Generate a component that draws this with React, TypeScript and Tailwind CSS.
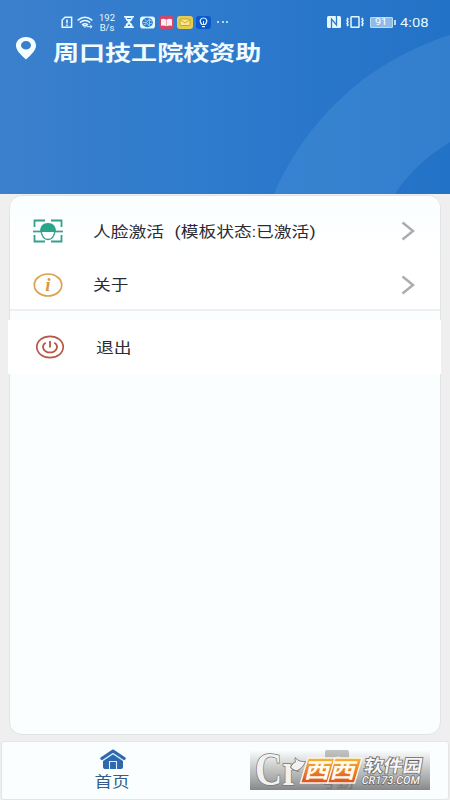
import React from 'react';

const SANS = "font-['Roboto','Noto_Sans_CJK_SC',sans-serif]";

function StatusBar() {
  return (
    <div className="flex h-[33px] items-center pl-[61px] pt-[11px] text-[#e4f8ff]">
      <svg className="h-[13px] w-[12px] shrink-0" viewBox="0 0 12 13" fill="none" stroke="currentColor" strokeWidth="1.5">
        <path d="M1.2 4V11.3h9.4V1.2H4z" />
        <path d="M6 3.6v4M6 8.6v1.5" strokeWidth="1.6" />
      </svg>
      <svg className="ml-[4px] h-[13px] w-[16px] shrink-0" viewBox="0 0 16 13" fill="none" stroke="currentColor" strokeWidth="1.5">
        <path d="M.6 4.4Q8-1.8 15.4 4.4M2.8 6.6q5.2-4.2 10.4 0M5 8.8q3-2.3 6 0" />
        <path d="M6 9.5h4l-2 2zM10 10.7h5m-2-2 2 2-2 1.5" strokeWidth="1" />
      </svg>
      <div className="ml-[5px] mt-px w-[18px] shrink-0 text-center font-['Roboto',sans-serif] text-[9.5px] leading-[10px]">
        <div>192</div>
        <div>B/s</div>
      </div>
      <svg className="ml-[8px] h-[12px] w-[10px] shrink-0" viewBox="0 0 10 12" fill="currentColor">
        <path d="M0 0h10v1.5H8.8L8 4 5.8 6 8 8l.8 2.5H10V12H0v-1.5h1.2L2 8l2.200-2L2 4 1.200 1.500H0z" />
        <path d="M3 2h4v1H3zM3.500 10 5 8l1.500 2z" fill="#367ac5" />
      </svg>
      <svg className="ml-[6px] h-[13px] w-[15px] shrink-0" viewBox="0 0 16 13">
        <rect width="16" height="13" rx="3" fill="#e5f8ff" />
        <ellipse cx="8" cy="6.5" rx="5.8" ry="5" fill="#297dcd" />
        <path d="M3 6.5h4l3-4v8l-3-4M10 4l3 1M10 8l3-1M5 3l2 2M4 9l3-1" fill="none" stroke="#b9e5ff" strokeWidth=".8" />
      </svg>
      <svg className="ml-[4px] h-[13px] w-[15px] shrink-0" viewBox="0 0 15 13">
        <rect width="15" height="13" rx="3" fill="#d4456a" />
        <path d="M2 3.2q3-1 5.5.5Q10 2.2 13 3.2v6.5q-3-.7-5.5.5-2.5-1.2-5.5-.5z" fill="#fff1f3" />
        <path d="M7.5 3.7v6.5" stroke="#dd8799" strokeWidth=".7" />
      </svg>
      <svg className="ml-[3px] h-[13px] w-[16px] shrink-0" viewBox="0 0 16 13">
        <rect width="16" height="13" rx="3" fill="#e5cd55" />
        <rect x="3" y="3" width="10" height="6.5" rx="1" fill="#ffe983" stroke="#b99428" strokeWidth=".8" />
        <path d="m3.500 4 4.500 3 4.500-3" fill="none" stroke="#b99428" strokeWidth=".8" />
      </svg>
      <svg className="ml-[3px] h-[13px] w-[15px] shrink-0" viewBox="0 0 15 13">
        <rect width="15" height="13" rx="3" fill="#0b58cd" />
        <path d="M5.800 8.500C2.500 4.500 5 2 7.500 2s5 2.500 1.700 6.500zM6 10.700h3" fill="none" stroke="#d3f3ff" strokeWidth="1.200" />
        <path d="M7.500 5v3" stroke="#d3f3ff" />
      </svg>
      <div className="ml-[6px] flex w-[11px] shrink-0 justify-between">
        <i className="size-[2px] rounded-full bg-[#dcf6ff]" />
        <i className="size-[2px] rounded-full bg-[#dcf6ff]" />
        <i className="size-[2px] rounded-full bg-[#dcf6ff]" />
      </div>
      <svg className="ml-[99px] h-[12px] w-[14px] shrink-0" viewBox="0 0 14 12">
        <rect width="14" height="12" rx="1.500" fill="currentColor" />
        <path d="M4.500 12V3l5 6V0" fill="none" stroke="#2f79c8" strokeWidth="1.300" />
      </svg>
      <svg className="ml-[5px] h-[12px] w-[18px] shrink-0" viewBox="0 0 18 12" fill="none" stroke="currentColor" strokeWidth="1.500">
        <rect x="5" y=".8" width="8" height="10.400" rx=".5" />
        <path d="M1 2l1 1-1 1.500L2 6 1 7.500 2 9l-1 1M17 2l-1 1 1 1.500L16 6l1 1.500L16 9l1 1" />
      </svg>
      <div className="ml-[6px] flex h-[11px] w-[23px] shrink-0 items-center justify-center rounded-[1px] border border-[#b8dcfa] bg-[#8ebbe8] font-['Roboto',sans-serif] text-[9px] leading-none text-white">
        <span className="mt-px origin-center scale-x-[1.2]">91</span>
      </div>
      <i className="ml-px h-[5px] w-[2px] shrink-0 bg-[#b8dcfa]" />
      <span className="ml-[4px] mt-[3px] inline-block origin-left scale-x-[1.17] font-['Roboto',sans-serif] text-[12.7px] leading-none">4:08</span>
    </div>
  );
}

function Header() {
  return (
    <header className="relative h-[194px] shrink-0 overflow-hidden bg-linear-to-r from-[#3b80cc] via-[#2d7acd] to-[#2272c7]">
      <svg className="absolute inset-0 h-full w-full" viewBox="0 0 450 194">
        <path d="M274 194C304 126 360 64 450 35V142Q414 164 395 194Z" fill="#4790d5" fillOpacity=".46" />
      </svg>
      <div className="relative">
        <StatusBar />
        <div className="flex items-start pl-[15px]">
          <svg className="mt-[4px] h-[23px] w-[22px] shrink-0" viewBox="0 0 22 23">
            <path fillRule="evenodd" d="M11 0C4.800 0 1 4 1 8.500 1 13 5 17 11 22.500 17 17 21 13 21 8.500 21 4 17.200 0 11 0m0 4a4.700 4 0 1 1 0 8.500A4.700 4 0 0 1 11 4" fill="#f5feff" />
          </svg>
          <h1 className={"ml-[16px] mt-[6px] origin-left scale-x-[1.24] whitespace-nowrap text-[21px] font-bold leading-[28px] text-[#f0fcff] " + SANS}>周口技工院校资助</h1>
        </div>
      </div>
    </header>
  );
}

function FaceIcon() {
  return (
    <svg className="h-[24px] w-[30px] shrink-0" viewBox="0 0 30 24" fill="none" stroke="#35a08b">
      <path d="M1.500 8V1.500H12M18 1.500h10.500V8M1.500 16v6.500H12M18 22.500h10.500V16" strokeWidth="1.800" />
      <path d="M0 12.500h30" strokeWidth="1.700" />
      <path d="M8 12C9 18 12 20.500 15 20.500S21 18 22 12" fill="white" strokeWidth="1.400" />
      <path d="M7 13C7 7 10 4 15 4s8 3 8 9H7z" fill="#28a58b" stroke="none" />
    </svg>
  );
}

function InfoIcon() {
  return (
    <svg className="h-[24px] w-[30px] shrink-0" viewBox="0 0 30 24">
      <ellipse cx="15" cy="12" rx="13.700" ry="11" fill="none" stroke="#dda04d" strokeWidth="1.700" />
      <text x="15" y="18" textAnchor="middle" fill="#d99845" fontFamily="Liberation Serif, serif" fontStyle="italic" fontWeight="bold" fontSize="19">i</text>
    </svg>
  );
}

function PowerIcon() {
  return (
    <svg className="h-[24px] w-[30px] shrink-0" viewBox="0 0 30 24" fill="none" stroke="#b85744">
      <ellipse cx="15" cy="12" rx="13.200" ry="10.700" strokeWidth="1.700" />
      <path d="M10.700 7.700C5.500 11 8.500 17.400 15 17.400s9.500-6.400 4.300-9.700M15 6v6.500" strokeWidth="1.800" />
    </svg>
  );
}

function Chevron() {
  return (
    <svg className="h-[20px] w-[14px] shrink-0" viewBox="0 0 14 20" fill="none">
      <path d="m1.500 1.500 10.500 8.500-10.500 8.500" stroke="#adadad" strokeWidth="2.500" />
    </svg>
  );
}

const rowText = "origin-left scale-x-[1.17] whitespace-nowrap text-[15.2px] leading-[22px] text-[#2b2b33] " + SANS;

function Watermark() {
  return (
    <svg className="absolute left-[250px] top-[10px] h-[39px] w-[180px] overflow-visible" viewBox="0 0 180 39">
      <defs>
        <linearGradient id="shade" x2="0" y2="1">
          <stop stopColor="#777" stopOpacity="0.02" />
          <stop offset="0.5" stopColor="#777" stopOpacity="0.45" />
          <stop offset="1" stopColor="#666" stopOpacity="0.78" />
        </linearGradient>
        <linearGradient id="orange" x2="0" y2="1">
          <stop stopColor="#f7b631" />
          <stop offset="1" stopColor="#dc4f20" />
        </linearGradient>
      </defs>
      <rect width="180" height="39" fill="url(#shade)" />
      <g fill="#f1f1f1" stroke="#777" strokeWidth="1.600" paintOrder="stroke">
        <text x="5" y="34" fontFamily="Liberation Serif, serif" fontWeight="bold" fontSize="47" textLength="44" lengthAdjust="spacingAndGlyphs">Cr</text>
        <path d="M41 16q2-4 5-5-1-2-.5-3.500 3 3.500 9.500 3.500-3 6-7.500 8-4 1-6.500-3z" />
      </g>
      <g stroke="#f8f6f0" strokeWidth="1.400" fill="url(#orange)">
        <path d="M58 7h27.500l-7.500 25H50.500z" />
        <path d="M85 7h27l-7.500 25H77.500z" />
      </g>
      <g transform="skewX(-14)" fill="#fffaf0" fontFamily="Noto Sans CJK SC, sans-serif" fontWeight="bold" fontSize="21">
        <text x="60.500" y="27" textLength="51" lengthAdjust="spacingAndGlyphs">西西</text>
      </g>
      <g transform="skewX(-10)" fill="#f6f6f6" stroke="#666" strokeWidth="1.400" paintOrder="stroke">
        <text x="117" y="21" textLength="58" fontFamily="Noto Sans CJK SC, sans-serif" fontWeight="bold" fontSize="17.500" lengthAdjust="spacingAndGlyphs">软件园</text>
        <text x="117" y="33" textLength="58" fontFamily="Roboto, sans-serif" fontWeight="500" fontSize="11" lengthAdjust="spacingAndGlyphs">CR173.COM</text>
      </g>
    </svg>
  );
}

function BottomNav() {
  return (
    <nav className="relative mx-px mt-[6px] flex h-[59px] shrink-0 rounded-[3px] border border-[#e3e5e6] bg-[#fbfeff]">
      <div className="flex w-1/2 flex-col items-center pr-[2px] pt-[7px]">
        <svg className="h-[21px] w-[26px]" viewBox="0 0 26 21" fill="#2e69ad">
          <path d="M3 10 13 3.500l10 6.500v8q0 2-3 2H6q-3 0-3-2z" />
          <path d="m1.500 10.500 11.500-7.800 11.500 7.800" fill="none" stroke="#dcefff" strokeWidth="4.500" />
          <path d="m1.800 9.500 11.200-7.500 11.200 7.500" fill="none" stroke="#2e69ad" strokeWidth="3" strokeLinejoin="round" strokeLinecap="round" />
          <path d="M9.500 20v-7.500h7V20" fill="none" stroke="#dcefff" strokeWidth="1.100" />
        </svg>
        <span className={"mt-[2px] scale-x-[1.17] text-[15px] leading-[20px] text-[#315f8c] " + SANS}>首页</span>
      </div>
      <div className="flex w-1/2 flex-col items-center pt-[8px] text-[#999]">
        <svg className="h-[20px] w-[24px]" viewBox="0 0 24 20">
          <rect width="24" height="20" rx="2" fill="#c2c2c2" />
          <path d="m5 8 4 4 4-5 5 2M6 16h12" fill="none" stroke="#eee" strokeWidth="1.500" />
        </svg>
        <span className={"mt-[2px] scale-x-[1.17] text-[15px] leading-[20px] " + SANS}>考勤</span>
      </div>
      <div className="absolute -left-[2px] -top-px">
        <Watermark />
      </div>
    </nav>
  );
}

export default function App() {
  return (
    <div className="flex h-[800px] w-[450px] flex-col overflow-hidden bg-[#efefef]">
      <Header />
      <main className="mx-[9px] mt-px flex h-[540px] shrink-0 flex-col rounded-[13px] border border-[#e1e4e5] bg-[#fafeff]">
        <section className="h-[115px] shrink-0 rounded-t-[12px] border-b-2 border-[#edefef] bg-linear-to-b from-[#fafeff] via-white to-white">
          <div className="flex h-[62px] items-center pl-[23px] pr-[25px] pt-[7px]">
            <FaceIcon />
            <span className={"ml-[30px] mt-[2px] " + rowText}>人脸激活<span className="ml-[9px]">(模板状态:已激活)</span></span>
            <span className="ml-auto"><Chevron /></span>
          </div>
          <div className="flex h-[51px] items-center pl-[23px] pr-[25px] pt-[3px]">
            <InfoIcon />
            <span className={"ml-[30px] " + rowText}>关于</span>
            <span className="ml-auto"><Chevron /></span>
          </div>
        </section>
        <section className="-ml-[2px] -mr-px mt-[9px] flex h-[54px] shrink-0 items-center bg-white pl-[27px]">
          <PowerIcon />
          <span className={"ml-[31px] mt-[2px] " + rowText}>退出</span>
        </section>
      </main>
      <BottomNav />
    </div>
  );
}
